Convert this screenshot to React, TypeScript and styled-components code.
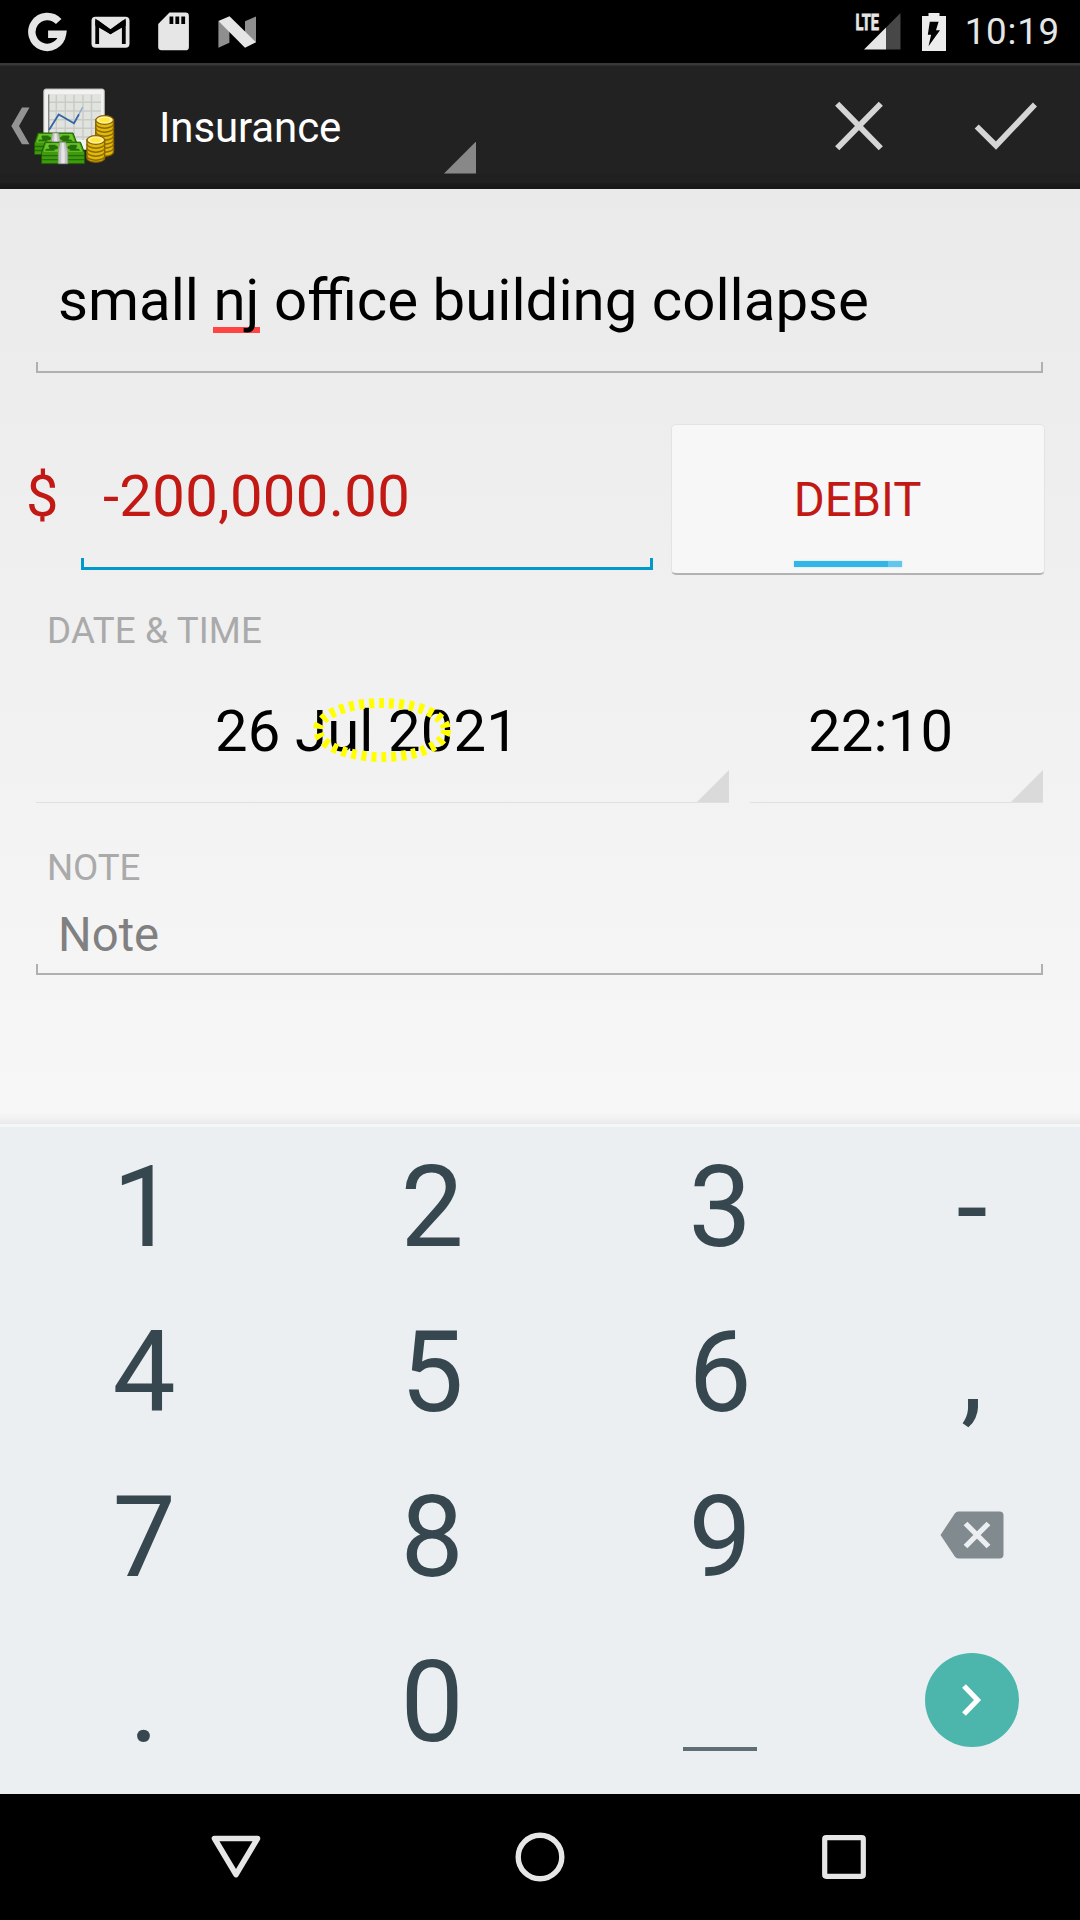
import React from "react";
import styled, { createGlobalStyle } from "styled-components";

const Global = createGlobalStyle`
  *, *::before, *::after { box-sizing: border-box; }
  html, body { margin: 0; padding: 0; background: #000; }
  body { font-family: Roboto, "Noto Sans", sans-serif; }
  svg { display: block; flex: none; }
  button { font: inherit; }
`;

const Screen = styled.div`
  width: 1080px;
  height: 1920px;
  display: flex;
  flex-direction: column;
  overflow: hidden;
  background: #000;
`;

const StatusBar = styled.header`
  height: 63px;
  flex: none;
  display: flex;
  align-items: center;
  justify-content: space-between;
  padding: 0 20px 0 27px;
  background: #000;
`;

const StatusGroup = styled.div`
  display: flex;
  align-items: center;
`;

const StatusIcon = styled.span<{ $gap?: number }>`
  margin-left: ${(p) => p.$gap ?? 0}px;
`;

const Clock = styled.span`
  margin-left: 19px;
  font-size: 36.75px;
  letter-spacing: 0.75px;
  line-height: 62px;
  color: #e6e6e6;
  padding-top: 1px;
`;

const ActionBar = styled.nav`
  height: 126px;
  flex: none;
  display: flex;
  align-items: center;
  background: linear-gradient(#383838 0 2px, #2c2c2c 2px 3px, #222 3px 111px, #202020 111px 119px, #1b1b1b 121px, #171717 100%);
`;

const UpButton = styled.div`
  width: 144px;
  display: flex;
  align-items: center;
  gap: 3px;
  padding-left: 11px;
`;

const AccountSpinner = styled.div`
  width: 332px;
  height: 100%;
  display: flex;
  justify-content: space-between;
  padding-left: 15px;
  color: #fff;
  font-size: 42px;
  letter-spacing: -0.1px;
  line-height: 129px;
`;

const SpinnerMark = styled.i<{ $color: string; $lift?: number }>`
  width: 32px;
  height: 32px;
  flex: none;
  align-self: flex-end;
  margin-bottom: ${(p) => p.$lift ?? 0}px;
  background: ${(p) => p.$color};
  clip-path: polygon(100% 0, 100% 100%, 0 100%);
`;

const Actions = styled.div`
  margin-left: auto;
  display: flex;
  align-items: center;
  gap: 91px;
  padding-right: 43px;
`;

const Form = styled.main`
  height: 935px;
  flex: none;
  display: flex;
  flex-direction: column;
  padding: 57px 37px 0 36px;
  background: linear-gradient(rgba(0, 0, 0, 0) 923px, rgba(0, 0, 0, 0.02) 929px, rgba(0, 0, 0, 0.06) 935px),
    linear-gradient(#eaeaea, #f7f7f7);
`;

const Field = styled.div<{ $height: number; $color: string; $weight: number; $leg: number }>`
  position: relative;
  height: ${(p) => p.$height}px;
  flex: none;
  padding-left: 22px;
  white-space: nowrap;

  &::after {
    content: "";
    position: absolute;
    left: 0;
    right: 0;
    bottom: 0;
    height: ${(p) => p.$leg}px;
    border: ${(p) => p.$weight}px solid ${(p) => p.$color};
    border-top: 0;
  }
`;

const TitleField = styled(Field)`
  font-size: 58.2px;
  line-height: 109px;
  color: #000;
`;

const NoteField = styled(Field)`
  font-size: 47.25px;
  line-height: 91px;
  color: #808080;
`;

const Misspelled = styled.span`
  background: linear-gradient(#ff4444, #ff4444) 0 calc(100% - 1.5px) / 100% 6px no-repeat;
`;

const AmountRow = styled.div`
  display: flex;
  margin: 51px -2px 0 -10px;
  height: 151px;
  color: #c21915;
`;

const Currency = styled.span`
  width: 55px;
  font-size: 57.75px;
  line-height: 144px;
`;

const AmountField = styled(Field)`
  width: 572px;
  font-size: 58px;
  letter-spacing: 0.33px;
  line-height: 144px;
`;

const TypeToggle = styled.button`
  position: relative;
  margin-left: 18px;
  flex: 1;
  border: 1px solid #e3e3e3;
  border-bottom: 2px solid #b3b3b3;
  border-radius: 5px;
  padding: 2px 1px 0 0;
  background: #f7f7f7;
  color: #c21915;
  font-size: 47.25px;
  line-height: 146px;
  text-align: center;

  &::after {
    content: "";
    position: absolute;
    left: 122px;
    bottom: 6px;
    width: 108px;
    height: 6px;
    background: linear-gradient(90deg, #33b5e5 94px, #62c7ec 94px);
    box-shadow: 0 0 2px #a5dcf2;
  }
`;

const SectionLabel = styled.h2<{ $top: number; $track: number }>`
  margin: ${(p) => p.$top}px 0 0 11px;
  font-size: 36.75px;
  font-weight: 400;
  letter-spacing: ${(p) => p.$track}px;
  line-height: 44px;
  color: #aaa;
`;

const DateRow = styled.div`
  position: relative;
  display: flex;
  gap: 21px;
  margin-top: 36px;
  height: 114px;
`;

const Picker = styled.div<{ $width: number; $shift: number }>`
  width: ${(p) => p.$width}px;
  display: flex;
  justify-content: space-between;
  border-bottom: 1px solid #e0e0e0;
  padding-left: ${(p) => p.$shift}px;
  font-size: 58px;
  letter-spacing: 0.15px;
  line-height: 84px;
`;

const Highlight = styled.svg`
  position: absolute;
  left: 275px;
  top: 7px;
`;

const Keyboard = styled.section`
  height: 670px;
  flex: none;
  border-top: 3px solid #f4f7f8;
  background: #ebeff2;
`;

const Keys = styled.div`
  display: grid;
  grid-template-columns: repeat(3, 288px) 216px;
  grid-auto-rows: 165px;
  margin-top: -5px;
`;

const Key = styled.div`
  display: flex;
  align-items: center;
  justify-content: center;
  color: #37474f;
`;

const TextKey = styled(Key)`
  padding-top: 5px;
  font-size: 112.5px;
  line-height: 159px;
`;

const BackspaceKey = styled(Key)`
  padding-right: 1px;
`;

const SpaceBar = styled.i`
  width: 74px;
  height: 4px;
  margin-top: 98px;
  background: #5f6d74;
`;

const NextButton = styled.div`
  width: 94px;
  height: 94px;
  border-radius: 50%;
  background: #4db6ac;
  display: flex;
  align-items: center;
  justify-content: center;
`;

const NavBar = styled.footer`
  flex: 1;
  display: flex;
  align-items: center;
  justify-content: space-between;
  padding: 0 210px;
`;

const GoogleIcon = () => (
  <svg width="40" height="40" viewBox="-0.7 0 40 40" fill="none" stroke="#e6e6e6" strokeWidth="7.4">
    <path d="M31 9.6A15.4 15.4 0 1 0 34.8 22.3H20.4" />
  </svg>
);

const MailIcon = () => (
  <svg width="39" height="32" viewBox="0 0 39 32">
    <rect x=".5" y=".7" width="38" height="31" rx="4" fill="#e6e6e6" />
    <path d="M6.2 28V6.3L19.5 16 32.8 6.3V28" fill="none" stroke="#000" strokeWidth="3.8" />
    <path d="M4.3 4.4h3l12.2 8.9 12.2-8.9h3v5L19.5 18.3 4.3 9.4z" fill="#000" />
  </svg>
);

const SdIcon = () => (
  <svg width="31" height="39" viewBox="0 0 31 39">
    <path d="M11.5.5H27.5a3.4 3.4 0 0 1 3.4 3.4v31a3.4 3.4 0 0 1-3.4 3.4h-24A3.4 3.4 0 0 1 .2 35V12z" fill="#e6e6e6" />
    <path d="M11.5 4.500h3.800V12h-3.800zM17.400 4.500h3.800V12h-3.800zM23.300 4.500h3.800V12h-3.800z" fill="#000" />
  </svg>
);

const NougatIcon = () => (
  <svg width="39" height="32" viewBox="0 0 39 32">
    <path d="M.4 5v26.700l11-5V14zM27 5.200 38 .4v26L27 17z" fill="#8f8f8f" />
    <path d="M.4 5 11.500.2 38 26.200 27 31.700z" fill="#e6e6e6" />
  </svg>
);

const SignalIcon = () => (
  <svg width="48" height="54" viewBox="0 -8 48 54">
    <path d="M47.500 0v36.500H33V14.500z" fill="#474747" />
    <path d="M33 14.500v22H11z" fill="#e6e6e6" />
    <text x="2.500" y="16.800" fontFamily="Roboto, sans-serif" fontSize="22" fontWeight="700" textLength="23.500" lengthAdjust="spacingAndGlyphs" fill="#e6e6e6" stroke="#e6e6e6" strokeWidth=".8">
      LTE
    </text>
  </svg>
);

const BatteryIcon = () => (
  <svg width="24" height="38" viewBox="0 0 24 38">
    <path d="M6.500 0h11v3H24v35H0V3h6.500z" fill="#ececec" />
    <path d="M7.800 8.800h8.800l-2.600 8.500h4L6.500 33.300l2.600-11.600H5.800z" fill="#000" />
  </svg>
);

const BackIcon = () => (
  <svg width="19" height="38" viewBox="0 0 19 38">
    <path d="M11 .5h7.500L8 19l10.500 18.200H11L.3 19z" fill="#939393" />
  </svg>
);

const Bundle = ({ x, y, w }: { x: number; y: number; w: number }) => (
  <g transform={`translate(${x} ${y})`}>
    <path d={`M4 .5H${w - 4}L${w} 11v11H.5V11z`} fill="#3f9a0c" stroke="#1d5c05" />
    <path d={`M5 1.500H${w - 5}L${w - 2} 10H2.500z`} fill="#6cc42b" />
    <path d={`M8 3h7l-2 2H7zM${w - 15} 3h7l1 2h-6zM5 7h7l2 2H4zM${w - 14} 7h8l2 2h-11z`} fill="#257008" />
    <ellipse cx="12.500" cy="5.800" rx="4.500" ry="2.200" fill="#257008" />
    <ellipse cx={w - 12.5} cy="5.800" rx="4.500" ry="2.200" fill="#257008" />
    <path d={`M1 14H${w - 0.5}M1 18H${w - 0.5}`} stroke="#236c06" strokeWidth="1.300" />
    <path d={`M${w / 2 - 3} .5h6l2 10.500V22h-9.500V11z`} fill="#c4c4c4" stroke="#909090" strokeWidth=".7" />
    <path d={`M${w / 2 - 1} 1h2l1 10v10.500h-3.500V11z`} fill="#e6e6e6" />
  </g>
);

const Coins = ({ x, y, rows }: { x: number; y: number; rows: number }) => (
  <g transform={`translate(${x} ${y}) scale(1.07 1)`}>
    <path d={`M.7 5v${rows * 4}a8.300 4.200 0 0 0 16.600 0V5z`} fill="#e0ba0a" stroke="#8b6200" strokeWidth="1.300" />
    {Array.from({ length: Math.floor(rows - 0.5) }, (_, i) => (
      <path key={i} d={`M.7 ${9 + i * 4}a8.300 4.200 0 0 0 16.600 0`} fill="none" stroke="#8f6a00" strokeWidth="1.400" />
    ))}
    <ellipse cx="9" cy="5" rx="8.300" ry="4.300" fill="#fff3a0" stroke="#8b6200" strokeWidth="1.300" />
    <ellipse cx="9" cy="5" rx="5.300" ry="2.300" fill="#ffe640" />
  </g>
);

const AppLogo = () => (
  <svg width="84" height="80" viewBox="0 0 84 80">
    <rect x="10.800" y="3" width="60.500" height="60.500" rx="2" fill="#f2f2f0" stroke="#b7b7b3" />
    <rect x="15" y="8" width="53" height="46" fill="#e1e3df" />
    <path
      d="M23.300 9v45M32.300 9v45M41 9v45M50 9v45M58.500 9v45M15 16.200h53M15 25h53M15 33.700h53M15 42.300h53M15 51h53"
      stroke="#c8cbc6"
      strokeWidth="1.500"
    />
    <path d="M15.700 8.500v45" stroke="#8a8a8a" strokeWidth="1.400" />
    <path d="M16 44 25.700 28.500 41 37.200l5-9" fill="none" stroke="#3465a4" strokeWidth="1.800" />
    <path d="m46 28.200 3.500-7" stroke="#8ba8cc" strokeWidth="1.400" />
    <Coins x={62} y={29} rows={8} />
    <Bundle x={1} y={46.5} w={43} />
    <Bundle x={8} y={55.7} w={43.5} />
    <Coins x={53.2} y={49} rows={4.5} />
  </svg>
);

const DiscardIcon = () => (
  <svg width="48" height="50" viewBox="0 0 48 50" fill="none" stroke="#d5d5d5" strokeWidth="5.800">
    <path d="M2.200 2.700 45.800 47.300M45.800 2.700 2.200 47.300" />
  </svg>
);

const SaveIcon = () => (
  <svg width="63" height="48" viewBox="0 0 63 48" fill="none" stroke="#d5d5d5" strokeWidth="5.800">
    <path d="M2.700 24.500 22 43.500 61 2.500" />
  </svg>
);

const BackspaceIcon = () => (
  <svg width="64" height="48" viewBox="0 0 64 48">
    <path
      d="M18.500.5H59.500a4 4 0 0 1 4 4v39a4 4 0 0 1-4 4h-41a5 5 0 0 1-3.700-2L.5 24 14.800 2.500a5 5 0 0 1 3.700-2z"
      fill="#818b8f"
    />
    <path d="m25.500 12.500 23 23M48.500 12.500l-23 23" stroke="#ebeff2" strokeWidth="5.300" />
  </svg>
);

const NextIcon = () => (
  <svg width="20" height="32" viewBox="0 0 20 32">
    <path d="M2 2 15.500 16 2 30" fill="none" stroke="#fff" strokeWidth="5.200" />
  </svg>
);

const BackNav = () => (
  <svg width="52" height="46" viewBox="0 0 52 46">
    <path d="M4.500 4.500h43L26 40.500z" fill="none" stroke="#e6e6e6" strokeWidth="5.600" strokeLinejoin="round" />
  </svg>
);

const HomeNav = () => (
  <svg width="50" height="50" viewBox="0 0 50 50">
    <circle cx="25" cy="25" r="21.800" fill="none" stroke="#e6e6e6" strokeWidth="5.400" />
  </svg>
);

const RecentNav = () => (
  <svg width="52" height="46" viewBox="0 0 52 46">
    <rect x="6.700" y="3.700" width="38.600" height="38.600" rx="1.500" fill="none" stroke="#e6e6e6" strokeWidth="5.200" />
  </svg>
);

export default function App() {
  return (
    <Screen>
      <Global />
      <StatusBar>
        <StatusGroup>
          <StatusIcon>
            <GoogleIcon />
          </StatusIcon>
          <StatusIcon $gap={24}>
            <MailIcon />
          </StatusIcon>
          <StatusIcon $gap={28}>
            <SdIcon />
          </StatusIcon>
          <StatusIcon $gap={29}>
            <NougatIcon />
          </StatusIcon>
        </StatusGroup>
        <StatusGroup>
          <StatusIcon>
            <SignalIcon />
          </StatusIcon>
          <StatusIcon $gap={21}>
            <BatteryIcon />
          </StatusIcon>
          <Clock>10:19</Clock>
        </StatusGroup>
      </StatusBar>

      <ActionBar>
        <UpButton>
          <BackIcon />
          <AppLogo />
        </UpButton>
        <AccountSpinner>
          Insurance
          <SpinnerMark $color="#888" $lift={15.5} />
        </AccountSpinner>
        <Actions>
          <DiscardIcon />
          <SaveIcon />
        </Actions>
      </ActionBar>

      <Form>
        <TitleField $height={127} $color="#b0b0b0" $weight={2} $leg={11}>
          small <Misspelled>nj</Misspelled> office building collapse
        </TitleField>

        <AmountRow>
          <Currency>$</Currency>
          <AmountField $height={146} $color="#0099cc" $weight={3} $leg={12}>
            -200,000.00
          </AmountField>
          <TypeToggle>DEBIT</TypeToggle>
        </AmountRow>

        <SectionLabel $top={34} $track={0.15}>
          DATE &amp; TIME
        </SectionLabel>
        <DateRow>
          <Picker $width={693} $shift={179}>
            26 Jul 2021
            <SpinnerMark $color="#dadada" />
          </Picker>
          <Picker $width={293} $shift={58}>
            22:10
            <SpinnerMark $color="#dadada" />
          </Picker>
          <Highlight width="142" height="68" viewBox="0 0 142 68">
            <ellipse cx="71" cy="34" rx="64" ry="27" fill="none" stroke="#ffff00" strokeWidth="10" strokeDasharray="5 5" />
          </Highlight>
        </DateRow>

        <SectionLabel $top={43} $track={-0.15}>
          NOTE
        </SectionLabel>
        <NoteField $height={85} $color="#b0b0b0" $weight={2} $leg={11}>
          Note
        </NoteField>
      </Form>

      <Keyboard>
        <Keys>
          <TextKey>1</TextKey>
          <TextKey>2</TextKey>
          <TextKey>3</TextKey>
          <TextKey>-</TextKey>
          <TextKey>4</TextKey>
          <TextKey>5</TextKey>
          <TextKey>6</TextKey>
          <TextKey>,</TextKey>
          <TextKey>7</TextKey>
          <TextKey>8</TextKey>
          <TextKey>9</TextKey>
          <BackspaceKey>
            <BackspaceIcon />
          </BackspaceKey>
          <TextKey>.</TextKey>
          <TextKey>0</TextKey>
          <Key>
            <SpaceBar />
          </Key>
          <Key>
            <NextButton>
              <NextIcon />
            </NextButton>
          </Key>
        </Keys>
      </Keyboard>

      <NavBar>
        <BackNav />
        <HomeNav />
        <RecentNav />
      </NavBar>
    </Screen>
  );
}
